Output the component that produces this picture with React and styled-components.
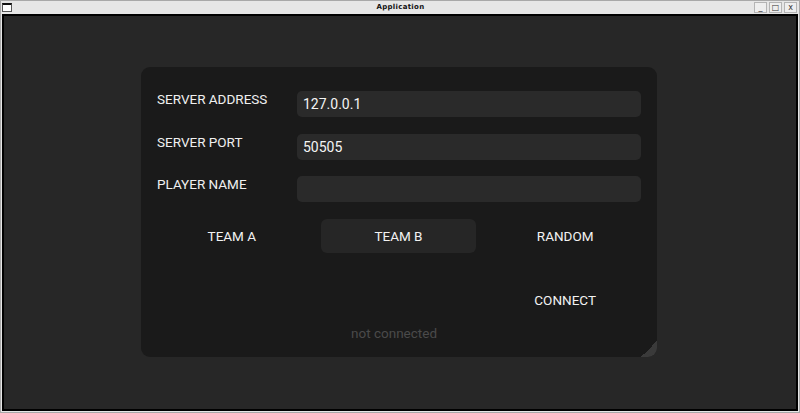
import React from 'react';
import styled, { createGlobalStyle } from 'styled-components';

const Global = createGlobalStyle`
  html, body { margin: 0; padding: 0; background: #d6d6d6; }
  body { width: 800px; height: 413px; overflow: hidden; font-family: Roboto, "Liberation Sans", sans-serif; }
`;

const Frame = styled.div`
  width: 800px;
  height: 413px;
  box-sizing: border-box;
  display: flex;
  flex-direction: column;
  background: #e6e6e6;
  border: 1px solid #a8a8a8;
`;

const TitleBar = styled.div`
  height: 12px;
  display: flex;
  align-items: center;
  justify-content: space-between;
  padding: 0 2px 0 1px;
  position: relative;
`;

const Title = styled.div`
  position: absolute;
  left: 0;
  right: 0;
  top: 0;
  text-align: center;
  font-family: "DejaVu Sans", sans-serif;
  font-size: 7px;
  line-height: 12px;
  font-weight: bold;
  color: #111;
  letter-spacing: 0.3px;
  padding-left: 1px;
`;

const WinIcon = styled.div`
  width: 8px;
  height: 6px;
  border: 1px solid #555;
  border-top-width: 2px;
  border-top-color: #111;
  background: #fff;
`;

const Controls = styled.div`
  display: flex;
  gap: 2px;
`;

const Ctl = styled.div`
  width: 13px;
  height: 11px;
  box-sizing: border-box;
  border: 1px solid #b4b4b4;
  background: #eeeeee;
  display: flex;
  align-items: center;
  justify-content: center;
  font-family: "DejaVu Sans", sans-serif;
  font-size: 8px;
  color: #333;
`;

const Client = styled.div`
  flex: 1;
  margin: 1px 1px 1px 1px;
  border: 2px solid #000;
  background: #272727;
  display: flex;
  justify-content: center;
  padding: 51px 2px 0 0;
`;

const Panel = styled.div`
  width: 516px;
  height: 290px;
  box-sizing: border-box;
  background: #1a1a1a;
  border-radius: 9px;
  padding: 24px 16px 0 16px;
  position: relative;
  overflow: hidden;
  display: flex;
  flex-direction: column;
`;

const Row = styled.div`
  display: flex;
  align-items: flex-start;
  height: 26px;
  margin-bottom: 16.5px;
`;

const Label = styled.div`
  width: 140px;
  color: #f0f0f0;
  font-size: 13.5px;
  line-height: 16px;
  margin-top: 0;
`;

const Input = styled.div`
  flex: 1;
  height: 26px;
  background: #2a2a2a;
  border-radius: 5px;
  color: #f4f4f4;
  font-size: 14px;
  line-height: 26px;
  padding-left: 6px;
`;

const Teams = styled.div`
  display: grid;
  grid-template-columns: repeat(3, 1fr);
  column-gap: 11px;
  margin: 0 -2px 0 -3px;
`;

const TeamBtn = styled.div`
  height: 34px;
  border-radius: 6px;
  background: ${p => (p.active ? '#262626' : 'transparent')};
  color: #f2f2f2;
  font-size: 13.5px;
  display: flex;
  align-items: center;
  justify-content: center;
`;

const ConnectRow = styled.div`
  display: grid;
  grid-template-columns: repeat(3, 1fr);
  column-gap: 11px;
  margin: 30px -2px 0 -3px;
`;

const ConnectBtn = styled.div`
  grid-column: 3;
  height: 34px;
  color: #f2f2f2;
  font-size: 13.5px;
  display: flex;
  align-items: center;
  justify-content: center;
`;

const Status = styled.div`
  text-align: center;
  color: #4a4a4a;
  font-size: 13.5px;
  margin-top: 8px;
  padding-right: 10px;
`;

const Grip = styled.div`
  position: absolute;
  right: 0;
  bottom: 0;
  width: 16px;
  height: 16px;
  background: linear-gradient(135deg, transparent 50%, #3a3a3a 50%);
`;

export default function App() {
  return (
    <>
      <Global />
      <Frame>
        <TitleBar>
          <WinIcon />
          <Title>Application</Title>
          <Controls>
            <Ctl>_</Ctl>
            <Ctl>□</Ctl>
            <Ctl>x</Ctl>
          </Controls>
        </TitleBar>
        <Client>
          <Panel>
            <Row>
              <Label>SERVER ADDRESS</Label>
              <Input>127.0.0.1</Input>
            </Row>
            <Row>
              <Label>SERVER PORT</Label>
              <Input>50505</Input>
            </Row>
            <Row>
              <Label>PLAYER NAME</Label>
              <Input />
            </Row>
            <Teams>
              <TeamBtn>TEAM A</TeamBtn>
              <TeamBtn active>TEAM B</TeamBtn>
              <TeamBtn>RANDOM</TeamBtn>
            </Teams>
            <ConnectRow>
              <ConnectBtn>CONNECT</ConnectBtn>
            </ConnectRow>
            <Status>not connected</Status>
            <Grip />
          </Panel>
        </Client>
      </Frame>
    </>
  );
}
